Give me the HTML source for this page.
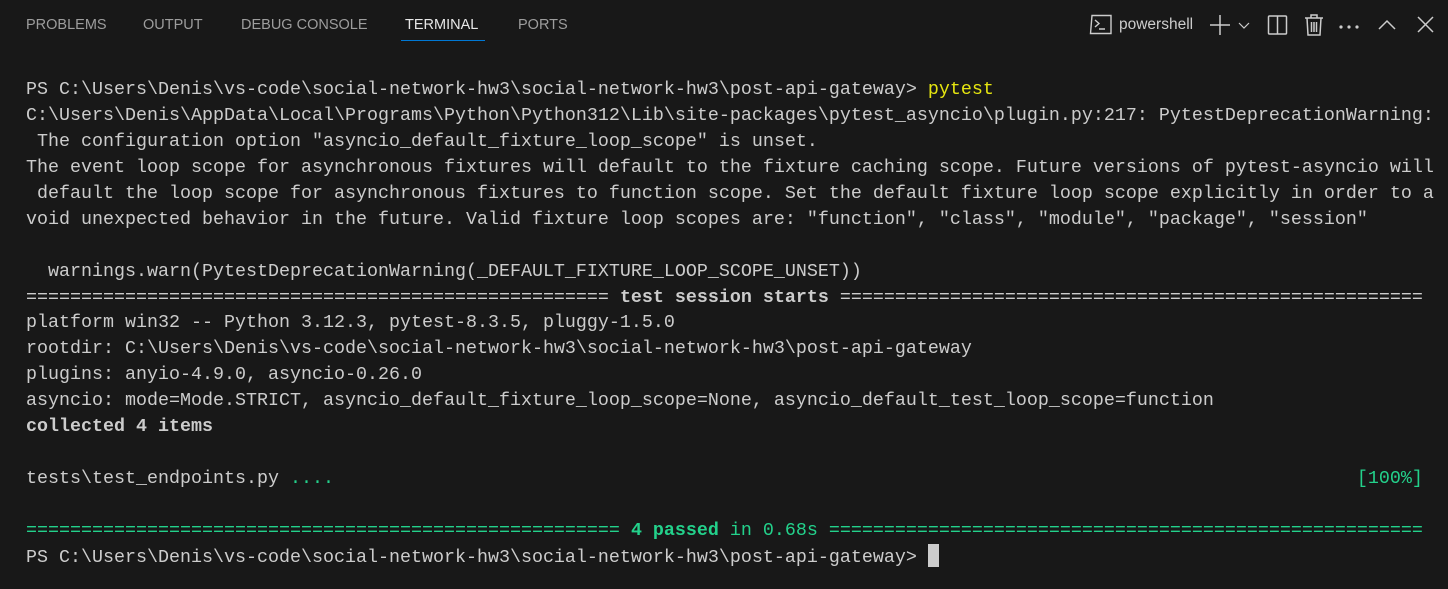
<!DOCTYPE html>
<html><head><meta charset="utf-8"><style>
html,body{margin:0;padding:0;background:#181818;width:1448px;height:589px;overflow:hidden}
.tabs{position:absolute;top:0;left:0;width:1448px;height:48px;font-family:"Segoe UI","Liberation Sans",sans-serif;font-size:14.5px;color:#9d9d9d}
.tab{position:absolute;top:17px}
.tab.active{color:#e7e7e7}
.ul{position:absolute;left:401px;top:40px;width:84px;height:1px;background:#0078d4}
.term{position:absolute;left:26px;top:77px;font-family:"Liberation Mono",monospace;font-size:18.33px;line-height:25.94px;color:#cccccc;white-space:pre;margin:0}
b{font-weight:bold}
.g{color:#23d18b}.y{color:#e5e510}
.cur{display:inline-block;width:11px;height:23px;background:#cccccc;vertical-align:-5px}
svg{position:absolute}
</style></head><body>
<div class="tabs">
<span class="tab" style="left:26px">PROBLEMS</span>
<span class="tab" style="left:143px">OUTPUT</span>
<span class="tab" style="left:241px">DEBUG CONSOLE</span>
<span class="tab active" style="left:405px">TERMINAL</span>
<span class="tab" style="left:518px">PORTS</span>
<div class="ul"></div>
<svg style="left:1089px;top:14px" width="24" height="22" viewBox="0 0 24 22" fill="none" stroke="#cccccc" stroke-width="1.4"><path d="M3 1.5h19v18H1.5z M1.5 19.5L3 1.5"/><path d="M6 6l4 3.5-4 3.5M10 15h6"/></svg>
<span style="position:absolute;left:1119px;top:16px;color:#cccccc;font-size:15.5px">powershell</span>
<svg style="left:1208px;top:14px" width="46" height="22" fill="none" stroke="#cccccc" stroke-width="1.5"><path d="M12 1v20M2 11h20"/><path d="M31 9l5 5 5-5" stroke-width="1.2"/></svg>
<svg style="left:1267px;top:14px" width="22" height="22" fill="none" stroke="#cccccc" stroke-width="1.5"><rect x="1.5" y="2" width="18" height="18" rx="1"/><path d="M10.5 2v18"/></svg>
<svg style="left:1303px;top:13px" width="22" height="24" fill="none" stroke="#cccccc" stroke-width="1.5"><path d="M2 5h18M8 5V2h6v3M4 5l1 17h12l1-17M8.5 9v10M11 9v10M13.5 9v10"/></svg>
<svg style="left:1338px;top:14px" width="22" height="22" fill="#cccccc"><circle cx="3" cy="13" r="1.6"/><circle cx="11" cy="13" r="1.6"/><circle cx="19" cy="13" r="1.6"/></svg>
<svg style="left:1377px;top:14px" width="20" height="22" fill="none" stroke="#cccccc" stroke-width="1.5"><path d="M2 15l8-8 8 8"/></svg>
<svg style="left:1416px;top:14px" width="20" height="22" fill="none" stroke="#cccccc" stroke-width="1.5"><path d="M2 3l15 15M17 3L2 18"/></svg>
</div>
<pre class="term">PS C:\Users\Denis\vs-code\social-network-hw3\social-network-hw3\post-api-gateway&gt; <span class="y">pytest</span>
C:\Users\Denis\AppData\Local\Programs\Python\Python312\Lib\site-packages\pytest_asyncio\plugin.py:217: PytestDeprecationWarning:
 The configuration option "asyncio_default_fixture_loop_scope" is unset.
The event loop scope for asynchronous fixtures will default to the fixture caching scope. Future versions of pytest-asyncio will
 default the loop scope for asynchronous fixtures to function scope. Set the default fixture loop scope explicitly in order to a
void unexpected behavior in the future. Valid fixture loop scopes are: "function", "class", "module", "package", "session"

  warnings.warn(PytestDeprecationWarning(_DEFAULT_FIXTURE_LOOP_SCOPE_UNSET))
===================================================== <b>test session starts</b> =====================================================
platform win32 -- Python 3.12.3, pytest-8.3.5, pluggy-1.5.0
rootdir: C:\Users\Denis\vs-code\social-network-hw3\social-network-hw3\post-api-gateway
plugins: anyio-4.9.0, asyncio-0.26.0
asyncio: mode=Mode.STRICT, asyncio_default_fixture_loop_scope=None, asyncio_default_test_loop_scope=function
<b>collected 4 items</b>

tests\test_endpoints.py <span class="g">....</span>                                                                                             <span class="g">[100%]</span>

<span class="g">====================================================== <b>4 passed</b> in 0.68s ======================================================</span>
PS C:\Users\Denis\vs-code\social-network-hw3\social-network-hw3\post-api-gateway&gt; <span class="cur"></span></pre>
</body></html>
